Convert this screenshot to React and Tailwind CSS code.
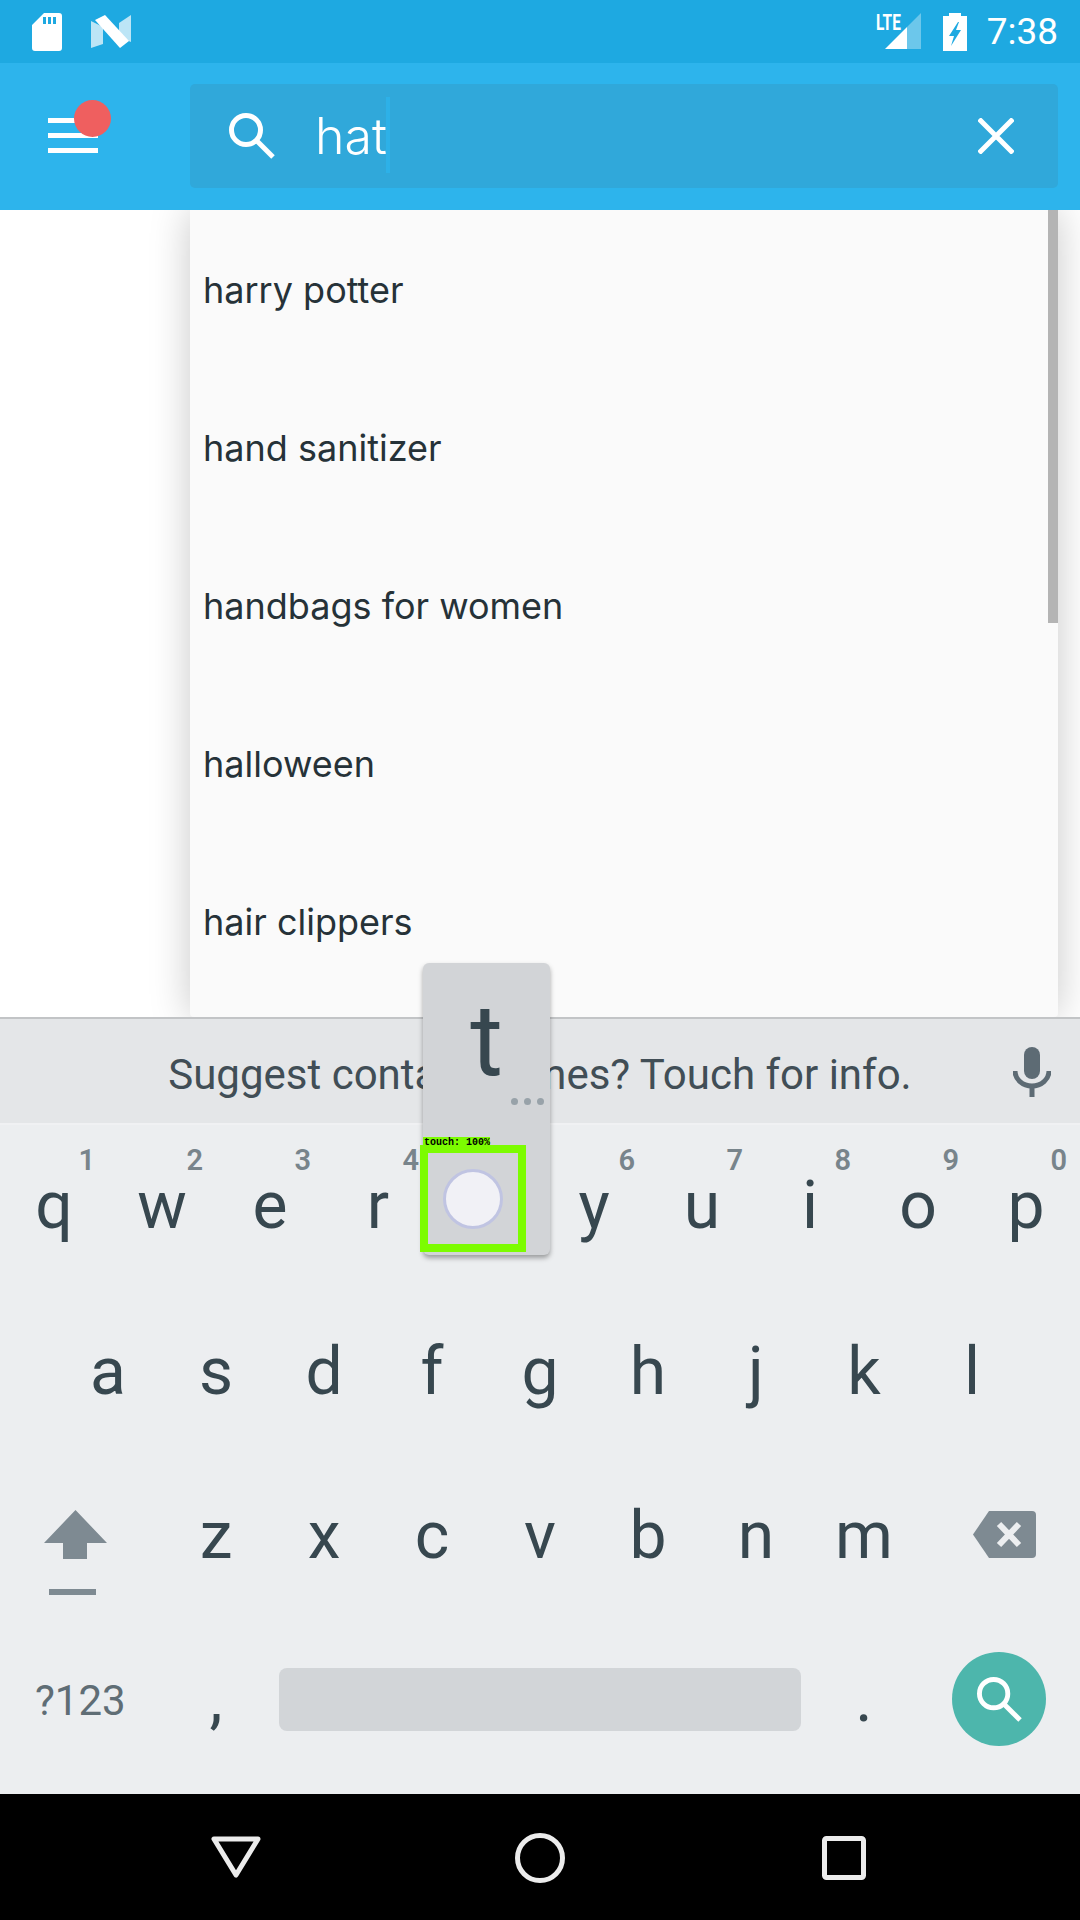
import React from "react";

const suggestions = ["harry potter", "hand sanitizer", "handbags for women", "halloween", "hair clippers"];

const row1 = [
  ["q", "1"],
  ["w", "2"],
  ["e", "3"],
  ["r", "4"],
  ["t", "5"],
  ["y", "6"],
  ["u", "7"],
  ["i", "8"],
  ["o", "9"],
  ["p", "0"],
];
const row2 = ["a", "s", "d", "f", "g", "h", "j", "k", "l"];
const row3 = ["z", "x", "c", "v", "b", "n", "m"];

const Key = ({ label, hint }) => (
  <div className="relative w-[108px] h-full flex items-center justify-center text-[66px] leading-none text-[#37474f]">
    {hint && (
      <span className="absolute right-[13px] top-[21px] text-[29px] font-semibold leading-none text-[#78848b]">
        {hint}
      </span>
    )}
    <span className={hint ? "pb-[4px]" : ""}>{label}</span>
  </div>
);

const SearchGlyph = ({ className }) => (
  <svg viewBox="0 0 46 46" className={className} fill="none" stroke="white" strokeWidth="5">
    <circle cx="17" cy="17" r="14.5" />
    <path d="M27.5 27.5 L44 44" />
  </svg>
);

const StatusBar = () => (
  <div className="h-[63px] bg-[#1ea9e1] flex items-center pl-[32px] pr-[22px] shrink-0">
    <svg viewBox="0 0 30 38" className="w-[30px] h-[38px]">
      <path
        d="M12 0 H27 a3 3 0 0 1 3 3 V35 a3 3 0 0 1 -3 3 H3 a3 3 0 0 1 -3 -3 V12 Z M11 4 V11 H14 V4 Z M16 4 V11 H19 V4 Z M21 4 V11 H24 V4 Z"
        fill="white"
        fillRule="evenodd"
      />
    </svg>
    <svg viewBox="0 0 40 33" className="w-[40px] h-[33px] ml-[29px]">
      <polygon points="0,6 12,12 12,29 0,33" fill="white" fillOpacity="0.7" />
      <polygon points="28,8 40,0 40,27 28,22" fill="white" fillOpacity="0.7" />
      <polygon points="4,5 14,0 38,26 29,33" fill="white" />
    </svg>
    <div className="ml-auto flex items-center">
      <div className="relative w-[45px] h-[37px]">
        <span className="absolute left-0 top-[-2px] text-[22px] font-bold leading-[24px] text-white font-['Roboto',sans-serif] origin-left scale-x-[0.7]">
          LTE
        </span>
        <svg viewBox="0 0 36 36" className="absolute left-[9px] top-0 w-[36px] h-[36px]">
          <polygon points="36,0 36,36 22,36 22,14" fill="white" fillOpacity="0.35" />
          <polygon points="22,14 22,36 0,36" fill="white" />
        </svg>
      </div>
      <svg viewBox="0 0 24 38" className="w-[24px] h-[38px] ml-[22px]">
        <path
          d="M6 0 H18 V3 H24 V38 H0 V3 H6 Z M15 9 L6 23 H11 L8 33 L18 17 H13 L16 9 Z"
          fill="white"
          fillRule="evenodd"
        />
      </svg>
      <span className="ml-[20px] text-[37px] leading-none text-white font-['Roboto',sans-serif]">7:38</span>
    </div>
  </div>
);

const AppBar = () => (
  <div className="h-[147px] bg-[#2db4ec] flex items-start pt-[21px] pl-[190px] pr-[22px] shrink-0 relative">
    <div className="absolute left-[48px] top-[55px] w-[50px] flex flex-col gap-[10px]">
      <div className="h-[5px] bg-white" />
      <div className="h-[5px] bg-white" />
      <div className="h-[5px] bg-white" />
    </div>
    <div className="absolute left-[74px] top-[37px] w-[37px] h-[37px] rounded-full bg-[#ef5f5f]" />
    <div className="w-full h-[104px] rounded-[5px] bg-[#30a8da] flex items-center pl-[39px] pr-[44px]">
      <SearchGlyph className="w-[46px] h-[46px]" />
      <div className="ml-[40px] relative text-[50px] font-light leading-none text-white font-['Inter',sans-serif]">
        hat
        <div className="absolute left-[71px] top-[-14px] w-[4px] h-[76px] bg-[#2db1e8]" />
      </div>
      <svg viewBox="0 0 36 36" className="w-[36px] h-[36px] ml-auto" stroke="white" strokeWidth="5">
        <path d="M1 1 L35 35 M35 1 L1 35" />
      </svg>
    </div>
  </div>
);

const Dropdown = () => (
  <div className="flex-1 bg-white flex pl-[190px] pr-[22px] overflow-hidden">
    <div className="relative w-full bg-[#fafafa] rounded-b-[4px] shadow-[0_0_40px_rgba(0,0,0,0.22)] pt-px">
      {suggestions.map((s) => (
        <div
          key={s}
          className="h-[158px] flex items-center pl-[13px] text-[36px] leading-none text-[#263238] font-['Inter',sans-serif]"
        >
          {s}
        </div>
      ))}
      <div className="absolute right-0 top-0 w-[10px] h-[413px] bg-[#b4b4b4]" />
    </div>
  </div>
);

const Keyboard = () => (
  <div className="h-[777px] shrink-0 border-t-[2px] border-[#c2c4c6] bg-[#eceef0] flex flex-col font-['Roboto',sans-serif]">
    <div className="relative h-[106px] pt-[8px] bg-[#e4e6e8] border-b-[2px] border-[#f0f1f3] flex items-center justify-center text-[42px] leading-none text-[#414e56]">
      Suggest contact names? Touch for info.
      <svg viewBox="0 0 38 50" className="absolute left-[1013px] top-[28px] w-[38px] h-[50px]" fill="none">
        <rect x="11" y="0" width="16" height="32" rx="8" fill="#5d6b74" />
        <path d="M2 24 a17 15 0 0 0 34 0" stroke="#5d6b74" strokeWidth="5" />
        <path d="M19 38 V50" stroke="#5d6b74" strokeWidth="5" />
      </svg>
    </div>
    <div className="h-[165px] flex">
      {row1.map(([k, n]) => (
        <Key key={k} label={k} hint={n} />
      ))}
    </div>
    <div className="h-[164px] flex pl-[54px]">
      {row2.map((k) => (
        <Key key={k} label={k} />
      ))}
    </div>
    <div className="h-[164px] flex items-center">
      <div className="w-[162px] h-full relative">
        <svg viewBox="0 0 63 85" className="absolute left-[44px] top-[56px] w-[63px] h-[85px]">
          <polygon points="31.5,0 63,33 43,33 43,49 19,49 19,33 0,33" fill="#7e8a92" />
          <rect x="5" y="79" width="47" height="6" fill="#7e8a92" />
        </svg>
      </div>
      {row3.map((k) => (
        <Key key={k} label={k} />
      ))}
      <div className="flex-1 h-full relative">
        <svg viewBox="0 0 63 47" className="absolute left-[55px] top-[57px] w-[63px] h-[47px]">
          <path d="M16 0 H59 a4 4 0 0 1 4 4 V43 a4 4 0 0 1 -4 4 H16 L0 23.5 Z" fill="#7e8a92" />
          <path d="M26 13 L46 34 M46 13 L26 34" stroke="#eceef0" strokeWidth="6" />
        </svg>
      </div>
    </div>
    <div className="h-[162px] flex items-center">
      <div className="w-[162px] pl-[35px] pt-[3px] text-[42px] leading-none text-[#5f6d75]">?123</div>
      <Key label="," />
      <div className="w-[522px] h-[63px] ml-[9px] mr-[9px] rounded-[8px] bg-[#d2d5d8]" />
      <Key label="." />
      <div className="w-[94px] h-[94px] ml-[34px] rounded-full bg-[#4db6ac] flex items-center justify-center">
        <SearchGlyph className="w-[45px] h-[45px]" />
      </div>
    </div>
  </div>
);

const NavBar = () => (
  <div className="h-[126px] bg-black shrink-0 flex items-center justify-center relative">
    <svg viewBox="0 0 50 42" className="absolute left-[211px] top-[42px] w-[50px] h-[42px]" fill="none">
      <path d="M3 3 H47 L25 39 Z" stroke="#ececec" strokeWidth="5" strokeLinejoin="round" />
    </svg>
    <svg viewBox="0 0 50 50" className="absolute left-[515px] top-[39px] w-[50px] h-[50px]" fill="none">
      <circle cx="25" cy="25" r="22.5" stroke="#ececec" strokeWidth="5" />
    </svg>
    <svg viewBox="0 0 44 44" className="absolute left-[822px] top-[42px] w-[44px] h-[44px]" fill="none">
      <rect x="2.5" y="2.5" width="39" height="39" rx="2" stroke="#ececec" strokeWidth="5" />
    </svg>
  </div>
);

// key preview + touch marker, lies over the keyboard
const KeyPopup = () => (
  <div className="absolute left-[423px] top-[963px] w-[127px] h-[292px] rounded-[6px] bg-[#d2d4d7] shadow-[0_3px_5px_rgba(0,0,0,0.35)] font-['Roboto',sans-serif]">
    <div className="absolute left-0 right-0 top-[28px] text-center text-[100px] leading-[100px] text-[#37474f]">t</div>
    <div className="absolute left-[88px] top-[135px] flex gap-[6px]">
      <div className="w-[7px] h-[7px] rounded-full bg-[#98a2a9]" />
      <div className="w-[7px] h-[7px] rounded-full bg-[#98a2a9]" />
      <div className="w-[7px] h-[7px] rounded-full bg-[#98a2a9]" />
    </div>
    <div className="absolute left-0 top-[174px] w-[67px] h-[11px] bg-[#7cfc00] text-[10px] leading-[11px] font-bold text-black pl-[1px] whitespace-nowrap font-['Liberation_Mono',monospace]">
      touch: 100%
    </div>
    <div className="absolute left-[-3px] top-[182px] w-[106px] h-[107px] border-[8px] border-[#7cfc00] flex items-center justify-center">
      <div className="w-[60px] h-[60px] rounded-full bg-[#f1f1f6] border-[3px] border-[#c0c4e2]" />
    </div>
  </div>
);

const App = () => {
  return (
    <div className="relative w-[1080px] h-[1920px] overflow-hidden flex flex-col bg-white">
      <StatusBar />
      <AppBar />
      <Dropdown />
      <Keyboard />
      <NavBar />
      <KeyPopup />
    </div>
  );
};

export default App;
